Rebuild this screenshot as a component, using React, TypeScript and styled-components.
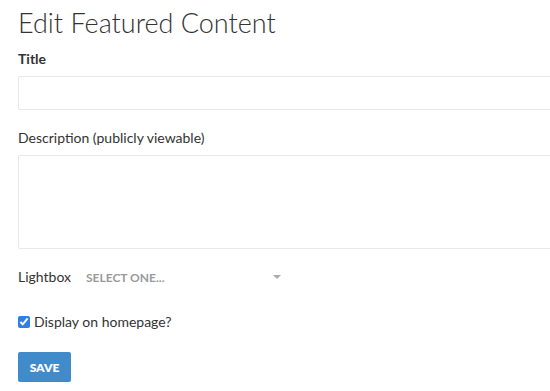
import React from "react";
import styled, { createGlobalStyle } from "styled-components";

const Global = createGlobalStyle`
	body {
		margin: 0;
		background: #fff;
		font-family: Lato, "Open Sans", sans-serif;
		color: #333;
	}
`;

const App = () => {
	return (
		<>
			<Global />
			<Page>
				<Heading>Edit Featured Content</Heading>
				<Field>
					<Label bold>Title</Label>
					<TextInput type='text' />
				</Field>
				<Field>
					<Label>Description (publicly viewable)</Label>
					<TextArea />
				</Field>
				<InlineRow>
					<Label>Lightbox</Label>
					<Select>
						<span>SELECT ONE...</span>
						<Caret />
					</Select>
				</InlineRow>
				<CheckRow>
					<CheckBox checked readOnly type='checkbox' />
					Display on homepage?
				</CheckRow>
				<SaveButton type='button'>SAVE</SaveButton>
			</Page>
		</>
	);
};

export default App;

const Page = styled.div`
	width: 532px;
	height: 391px;
	padding: 6px 0 0 18px;
	overflow: hidden;
`;
const Heading = styled.h1`
	margin: 0 0 10px;
	font-family: Lato, sans-serif;
	font-weight: 300;
	font-size: 27px;
	line-height: 34px;
	color: #333;
`;
const Field = styled.div`
	display: flex;
	flex-direction: column;
	margin-bottom: 19px;
`;
const Label = styled.label<{ bold?: boolean }>`
	font-size: 14px;
	font-weight: ${(p) => (p.bold ? 700 : 400)};
	line-height: 18px;
	color: #333;
	margin-bottom: 8px;
`;
const TextInput = styled.input`
	height: 34px;
	box-sizing: border-box;
	width: calc(100% + 20px);
	border: 1px solid #e8e8e8;
	border-radius: 2px;
	outline: none;
`;
const TextArea = styled.textarea`
	height: 94px;
	box-sizing: border-box;
	width: calc(100% + 20px);
	border: 1px solid #e8e8e8;
	border-radius: 2px;
	outline: none;
	resize: none;
`;
const InlineRow = styled.div`
	display: flex;
	align-items: center;
	gap: 15px;
	label {
		margin: 0;
	}
`;
const Select = styled.div`
	width: 197px;
	display: flex;
	align-items: center;
	justify-content: space-between;
	font-size: 12px;
	font-weight: 700;
	color: #9a9a9a;
	height: 18px;
`;
const Caret = styled.span`
	width: 0;
	height: 0;
	border-left: 4px solid transparent;
	border-right: 4px solid transparent;
	border-top: 4px solid #aaa;
	margin-right: 2px;
`;
const CheckRow = styled.label`
	display: flex;
	align-items: center;
	gap: 4px;
	font-size: 14px;
	color: #333;
	margin-top: 27px;
`;
const CheckBox = styled.input`
	width: 12px;
	height: 12px;
	margin: 0;
	accent-color: #2f7fe0;
`;
const SaveButton = styled.button`
	display: block;
	margin-top: 22px;
	width: 53px;
	height: 30px;
	border: none;
	border-radius: 2px;
	background: #428bca;
	color: #fff;
	font-family: Lato, sans-serif;
	font-weight: 800;
	font-size: 12px;
`;
